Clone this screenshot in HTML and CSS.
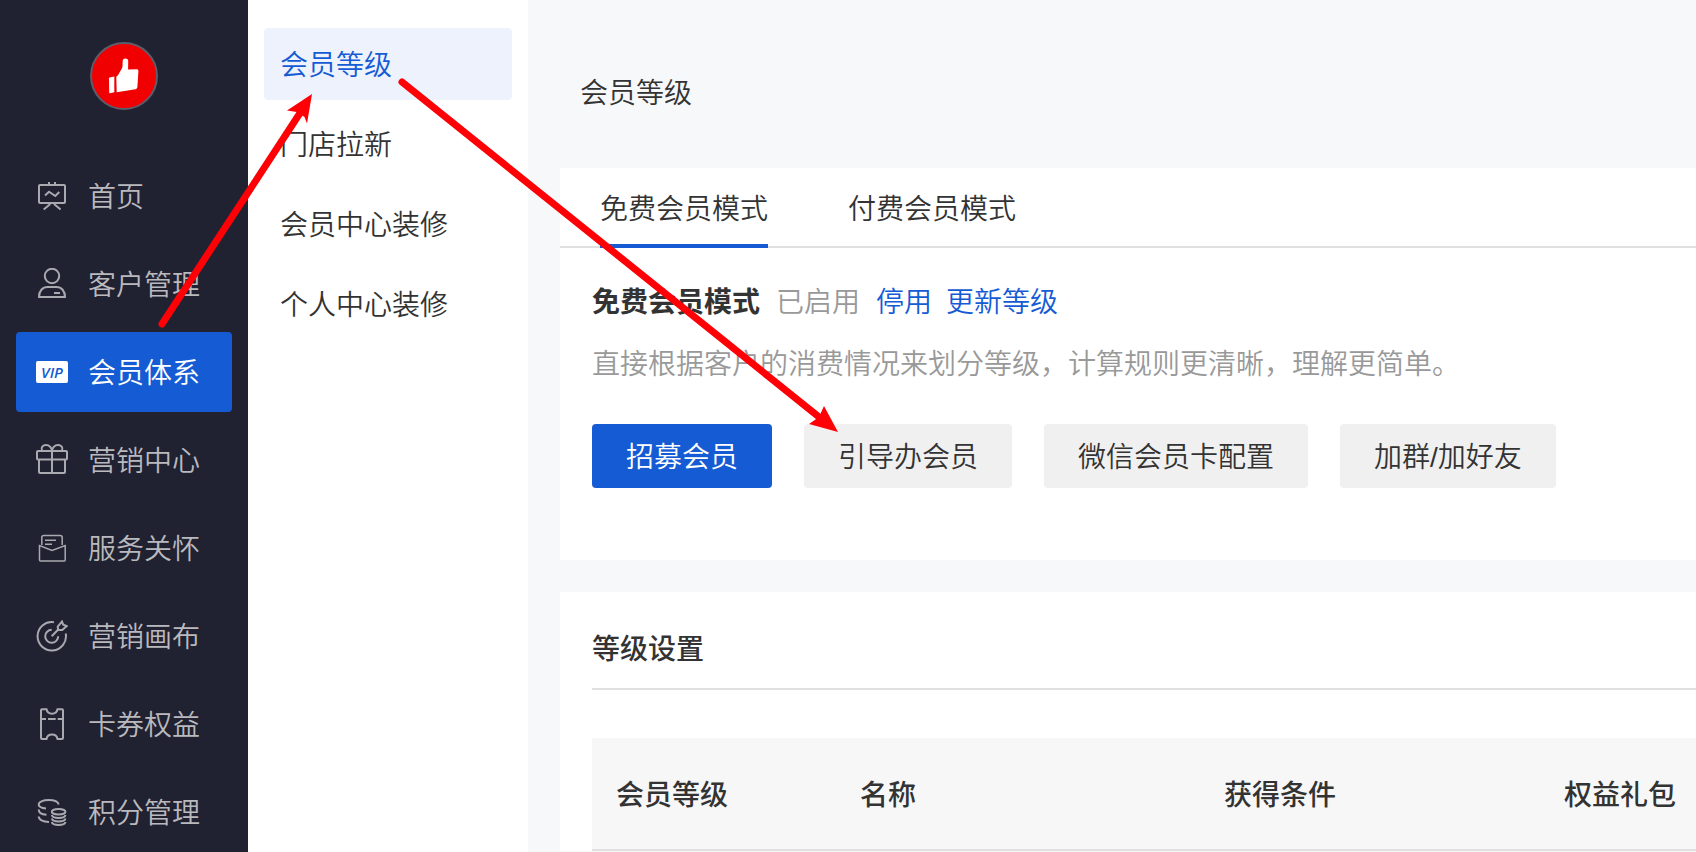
FILE: index.html
```html
<!DOCTYPE html>
<html lang="zh-CN">
<head>
<meta charset="utf-8">
<title>会员等级</title>
<link rel="stylesheet" href="styles.css">
</head>
<body>
<div class="app">
  <aside class="sidebar">
    <div class="avatar">
      <svg viewBox="0 0 68 68" aria-hidden="true">
        <circle class="avatar-disc" cx="34" cy="34" r="33"/>
        <path class="avatar-thumb" d="M19 36.200q0-.6.6-.7l4.700-.9v15.700l-4.400.9q-.7.100-.7-.6zM26.300 34.700c1.700-1.200 2.700-3.200 3.700-5 1.500-2.500 2.300-3.600 2.500-5.500l.2-5.700q.3-2 2.600-2.100 2.900.2 2.900 2.600l-.1 8.500 8.900-.3q1.500.2 1.400 1.700l-.3 5.100-.7 11.100q-.2 1.900-1.900 2.200l-18.800 3z"/>
      </svg>
    </div>
    <nav class="nav">
      <a class="nav-item" href="#">
        <svg class="icon" viewBox="0 0 32 32" aria-hidden="true"><rect x="3" y="5" width="26" height="18" rx="1"/><path d="M13 2v3M19 2v3M9 15.500l4-3.800 6.300 4.300 4-4M14.300 24l-6.600 5.500M18 24l6.600 5.500"/></svg>
        <span class="nav-label">首页</span>
      </a>
      <a class="nav-item" href="#">
        <svg class="icon" viewBox="0 0 32 32" aria-hidden="true"><circle cx="16" cy="8" r="7.200"/><path d="M3 29c0-6 3.500-10 8.500-10h9c5 0 8.500 4 8.500 10zM18 25h6"/></svg>
        <span class="nav-label">客户管理</span>
      </a>
      <a class="nav-item nav-item-active" href="#">
        <span class="vip">VIP</span>
        <span class="nav-label">会员体系</span>
      </a>
      <a class="nav-item" href="#">
        <svg class="icon" viewBox="0 0 32 32" aria-hidden="true"><rect x="1" y="7" width="30" height="8.500" rx="1"/><path d="M3 15.500V28q0 1 1 1h24q1 0 1-1V15.500M16 7v22M6 6.500C4.500 3.500 7 1 10 1s6 2.500 6 6c0-3.500 3-6 6-6s5.500 2.500 4 5.500"/></svg>
        <span class="nav-label">营销中心</span>
      </a>
      <a class="nav-item" href="#">
        <svg class="icon icon-thin" viewBox="0 0 32 32" aria-hidden="true"><path d="M5.800 13V5.500q0-2 2-2h16.400q2 0 2 2V13M3.500 13.500V28q0 1 1 1h23.700q1 0 1-1V13.500L16 18.500zM9 8.300h11M9 12.300h7"/></svg>
        <span class="nav-label">服务关怀</span>
      </a>
      <a class="nav-item" href="#">
        <svg class="icon" viewBox="0 0 32 32" aria-hidden="true"><path d="M18 2.200A14.200 14.200 0 1 0 29.700 13.500M15.700 9.800A6.500 6.500 0 1 0 22.200 16.300M15.700 16.300l7-7.300M21.700 6.700L26 1.500l1.200 3.200 3.500 1.300-4.500 4h-4z"/></svg>
        <span class="nav-label">营销画布</span>
      </a>
      <a class="nav-item" href="#">
        <svg class="icon" viewBox="0 0 32 32" aria-hidden="true"><path d="M5 2.200q0-1 1-1h4.500c1 6 10 6 11 0H26q1 0 1 1V30q0 1-1 1h-4.500c-1-6-10-6-11 0H6q-1 0-1-1zM5 11h5M12 11h7.700M21.700 11H27"/></svg>
        <span class="nav-label">卡券权益</span>
      </a>
      <a class="nav-item" href="#">
        <svg class="icon" viewBox="0 0 32 32" aria-hidden="true"><path d="M22.700 8.500C22 5.500 17.500 4 12.700 4 7 4 2.700 6 2.700 8.500c0 2 3 3.600 7.300 4M2.700 13.500c0 3 3 5 7.800 5.300M2.700 20.500c0 3 4 5.300 10.300 5.500M15.800 19c1 4 12.700 4 13.700 0M15.800 22.500c1 4 12.700 4 13.700 0M15.800 26c1 4 12.700 4 13.700 0"/><ellipse cx="22.600" cy="15.800" rx="6.800" ry="2.800"/></svg>
        <span class="nav-label">积分管理</span>
      </a>
    </nav>
  </aside>

  <nav class="submenu">
    <a class="submenu-item submenu-item-active" href="#">会员等级</a>
    <a class="submenu-item" href="#">门店拉新</a>
    <a class="submenu-item" href="#">会员中心装修</a>
    <a class="submenu-item" href="#">个人中心装修</a>
  </nav>

  <main class="main">
    <h1 class="page-title">会员等级</h1>
    <section class="card">
      <div class="tabs" role="tablist">
        <button class="tab tab-active" type="button" role="tab" aria-selected="true">免费会员模式</button>
        <button class="tab" type="button" role="tab" aria-selected="false">付费会员模式</button>
      </div>
      <div class="mode">
        <div class="mode-head">
          <h2 class="mode-title">免费会员模式</h2>
          <span class="muted">已启用</span>
          <div class="mode-links">
            <a class="link" href="#">停用</a>
            <a class="link" href="#">更新等级</a>
          </div>
        </div>
        <p class="mode-desc muted">直接根据客户的消费情况来划分等级，计算规则更清晰，理解更简单。</p>
        <div class="actions">
          <button class="btn btn-primary" type="button">招募会员</button>
          <button class="btn" type="button">引导办会员</button>
          <button class="btn" type="button">微信会员卡配置</button>
          <button class="btn" type="button">加群<span class="latin">/</span>加好友</button>
        </div>
      </div>
    </section>
    <section class="card card-levels">
      <h2 class="section-title">等级设置</h2>
      <table class="levels">
        <thead>
          <tr>
            <th class="col-level">会员等级</th>
            <th class="col-name">名称</th>
            <th class="col-rule">获得条件</th>
            <th>权益礼包</th>
          </tr>
        </thead>
      </table>
    </section>
  </main>

  <svg class="arrows" viewBox="0 0 850 450" aria-hidden="true">
    <path class="arrow-line" d="M162 324L302 110M402 82L824 421"/>
    <path class="arrow-head" d="M312 94l-25 16.500 9.500 1.500 8 5 2.500 6.500zM838 432l-14-26-5 11-10 7z"/>
  </svg>
</div>
</body>
</html>
```
FILE: styles.css
```css
* {
  box-sizing: border-box;
}

body {
  margin: 0;
  background: #f7f8fa;
  color: #333;
  font: 350 28px/40px "Noto Sans CJK SC", sans-serif;
}

h1, h2, p {
  margin: 0;
  font-size: inherit;
}

a {
  color: inherit;
  text-decoration: none;
}

button {
  border: 0;
  padding: 0;
  background: none;
  color: inherit;
  font: inherit;
}

.app {
  position: relative;
  display: flex;
  min-height: 100vh;
}

/* Primary navigation */
.sidebar {
  flex: 0 0 248px;
  padding: 42px 16px 0;
  background: #202131;
  color: #b9b9be;
}

.avatar {
  width: 68px;
  height: 68px;
  margin: 0 auto 46px;
}

.avatar svg {
  display: block;
}

.avatar-disc {
  fill: #f00000;
  stroke: #5d5c6b;
  stroke-width: 2;
}

.avatar-thumb {
  fill: #fff;
}

.nav {
  display: flex;
  flex-direction: column;
  gap: 8px;
}

.nav-item {
  display: flex;
  align-items: center;
  gap: 20px;
  height: 80px;
  padding: 0 20px;
  border-radius: 4px;
  white-space: nowrap;
}

.nav-item-active {
  background: #155bd4;
  color: #fff;
}

.nav-label {
  padding-bottom: 2px;
}

.icon {
  flex: none;
  width: 32px;
  height: 32px;
  fill: none;
  stroke: #a9a9b0;
  stroke-width: 2;
}

.icon-thin {
  stroke-width: 1.5;
}

.vip {
  width: 32px;
  height: 22px;
  border-radius: 2px;
  background: #fff;
  color: #155bd4;
  font: italic 600 15px/22px "Open Sans", sans-serif;
  text-align: center;
}

/* Secondary navigation */
.submenu {
  display: flex;
  flex: 0 0 280px;
  flex-direction: column;
  gap: 8px;
  padding: 28px 16px;
  background: #fff;
}

.submenu-item {
  padding: 15px 16px 17px;
  border-radius: 4px;
}

.submenu-item-active {
  background: #edf2fd;
  color: #155bd4;
}

/* Content */
.main {
  flex: 1;
  min-width: 0;
  padding-left: 32px;
}

.page-title {
  padding: 71px 20px 57px;
  font-weight: inherit;
}

.card {
  margin-bottom: 32px;
  background: #fff;
}

.tabs {
  display: flex;
  gap: 80px;
  height: 80px;
  padding: 0 40px;
  border-bottom: 2px solid #e0e0e0;
}

.tab {
  height: 80px;
  padding-top: 2px;
  border-bottom: 4px solid transparent;
}

.tab-active {
  border-color: #155bd4;
}

.mode {
  padding: 32px 32px 72px;
}

.mode-head {
  display: flex;
  gap: 16px;
}

.mode-title {
  font-weight: 700;
}

.mode-links {
  display: flex;
  gap: 14px;
}

.muted {
  color: #999;
}

.link {
  color: #155bd4;
}

.mode-desc {
  margin: 22px 0 42px;
}

.actions {
  display: flex;
  gap: 32px;
}

.btn {
  height: 64px;
  padding: 0 34px 2px;
  border-radius: 4px;
  background: #f0f0f0;
  white-space: nowrap;
}

.btn-primary {
  background: #155bd4;
  color: #fff;
}

.latin {
  font-family: "Liberation Sans", sans-serif;
  line-height: 1;
}

.card-levels {
  margin-bottom: 0;
  padding: 35px 0 0 32px;
}

.section-title {
  padding-bottom: 21px;
  border-bottom: 2px solid #e0e0e0;
  font-weight: 500;
}

.levels {
  width: 100%;
  margin-top: 48px;
  border-collapse: separate;
  border-spacing: 0;
  table-layout: fixed;
}

.levels th {
  height: 113px;
  padding: 0 0 2px 24px;
  border-bottom: 2px solid #e0e0e0;
  background: #f7f7f7;
  font-weight: 500;
  text-align: left;
  white-space: nowrap;
}

.col-level {
  width: 244px;
}

.col-name {
  width: 364px;
}

.col-rule {
  width: 340px;
}

/* Annotation arrows over the page */
.arrows {
  position: absolute;
  top: 0;
  left: 0;
  width: 850px;
  height: 450px;
  pointer-events: none;
}

.arrow-line {
  fill: none;
  stroke: #ff0006;
  stroke-linecap: round;
  stroke-width: 7;
}

.arrow-head {
  fill: #ff0006;
}
```
